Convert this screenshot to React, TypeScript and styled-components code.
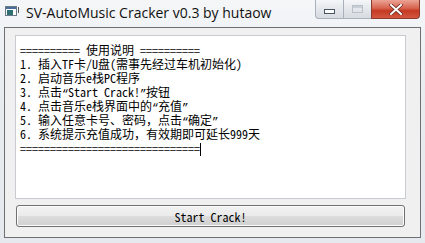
import styled, { createGlobalStyle } from "styled-components";

const GlobalStyle = createGlobalStyle`
  html, body {
    margin: 0;
    padding: 0;
    background: #e9edf1;
  }
`;

const lines = [
  "========== 使用说明 ==========",
  "1. 插入TF卡/U盘(需事先经过车机初始化)",
  "2. 启动音乐e栈PC程序",
  "3. 点击“Start Crack!”按钮",
  "4. 点击音乐e栈界面中的“充值”",
  "5. 输入任意卡号、密码，点击“确定”",
  "6. 系统提示充值成功，有效期即可延长999天",
];

// the old SimSun shows curly quotes half-width, so they get their own narrow cell
const renderLine = (line: string) =>
  line.split(/([“”])/).map((part, idx) =>
    part === "“" || part === "”" ? (
      <HalfQuote key={idx}>{part}</HalfQuote>
    ) : (
      part
    )
  );

function App() {
  return (
    <>
      <GlobalStyle />
      <Window>
        <TitleBar>
          <AppIcon>
            <svg width="12" height="10" viewBox="0 0 12 10">
              <rect x="0.5" y="0.5" width="11" height="9" fill="#fff" stroke="#6a7a88" />
              <rect x="1" y="1" width="10" height="2" fill="#4a6e9a" />
              <rect x="2" y="4" width="6" height="5" fill="#2f6f73" />
            </svg>
            <IconMark />
          </AppIcon>
          <Title>SV-AutoMusic Cracker v0.3 by hutaow</Title>
          <Controls>
            <CtrlButton>
              <MinGlyph />
            </CtrlButton>
            <CtrlButton>
              <MaxGlyph />
            </CtrlButton>
            <CloseButton>
              <svg width="14" height="11" viewBox="0 0 14 11">
                <path
                  d="M2 1 L12 10 M12 1 L2 10"
                  stroke="#6a2a22"
                  strokeWidth="3.6"
                  strokeLinecap="square"
                />
                <path
                  d="M2 1 L12 10 M12 1 L2 10"
                  stroke="#fff"
                  strokeWidth="2"
                  strokeLinecap="square"
                />
              </svg>
            </CloseButton>
          </Controls>
        </TitleBar>
        <Frame>
          <Client>
            <TextArea>
              {lines.map((line, idx) => (
                <Line key={idx}>{renderLine(line)}</Line>
              ))}
              <Line>
                ==============================
                <Caret />
              </Line>
            </TextArea>
            <StartButton>Start Crack!</StartButton>
          </Client>
        </Frame>
      </Window>
    </>
  );
}

const Window = styled.div`
  width: 425px;
  height: 243px;
  display: flex;
  flex-direction: column;
  background: linear-gradient(180deg, #f4f6f8 0%, #e8ecef 40%, #e6eaee 100%);
`;

const TitleBar = styled.div`
  height: 27px;
  display: flex;
  align-items: flex-start;
  padding-left: 5px;
  box-sizing: border-box;
`;

const AppIcon = styled.div`
  position: relative;
  width: 16px;
  height: 12px;
  margin-top: 6px;
  display: flex;
`;

const IconMark = styled.span`
  position: absolute;
  left: 13px;
  top: 1px;
  width: 1px;
  height: 6px;
  background: #555;
`;

const Title = styled.div`
  margin-left: 5px;
  margin-top: 4px;
  font-family: "Open Sans", "Noto Sans", sans-serif;
  font-size: 14px;
  line-height: 18px;
  color: #111;
  white-space: nowrap;
`;

const Controls = styled.div`
  margin-left: auto;
  margin-right: 5px;
  display: flex;
  height: 19px;
`;

const CtrlButton = styled.div`
  width: 27px;
  height: 18px;
  border: 1px solid #a9b1bb;
  border-top: none;
  border-right: none;
  background: linear-gradient(180deg, #f4f6f8 0%, #e2e6ea 55%, #d6dbe1 100%);
  display: flex;
  align-items: center;
  justify-content: center;
  &:first-child {
    border-bottom-left-radius: 4px;
  }
`;

const MinGlyph = styled.span`
  width: 9px;
  height: 3px;
  border: 1px solid #4a5562;
  background: #fff;
  margin-top: 4px;
`;

const MaxGlyph = styled.span`
  width: 9px;
  height: 6px;
  border: 1px solid #b9c0c8;
  box-shadow: inset 0 2px 0 #c9cfd6;
`;

const CloseButton = styled.div`
  width: 47px;
  height: 18px;
  border: 1px solid #8c3a30;
  border-top: none;
  border-bottom-right-radius: 4px;
  background: linear-gradient(180deg, #eba395 0%, #d8644f 45%, #c43a22 60%, #d4583f 100%);
  display: flex;
  align-items: center;
  justify-content: center;
`;

const Frame = styled.div`
  flex: 1;
  display: flex;
  padding: 0 4px 5px 4px;
`;

const Client = styled.div`
  flex: 1;
  display: flex;
  flex-direction: column;
  background: #f0f0f0;
  border: 1px solid #6d6f73;
  padding: 7px 14px 10px 10px;
`;

const TextArea = styled.div`
  height: 164px;
  background: #fff;
  border: 1px solid #c8ccd1;
  padding: 7px 4px;
  box-sizing: border-box;
  font-family: "Noto Sans Mono CJK SC", "Noto Sans CJK SC", monospace;
  font-size: 12px;
  color: #000;
`;

const Line = styled.div`
  height: 14px;
  line-height: 14px;
  white-space: pre;
  overflow: visible;
`;

const HalfQuote = styled.span`
  display: inline-block;
  width: 6px;
  font-family: "Liberation Mono", monospace;
  font-size: 11px;
  text-align: center;
`;

const Caret = styled.span`
  display: inline-block;
  width: 1px;
  height: 13px;
  vertical-align: middle;
  background: #000;
`;

const StartButton = styled.button`
  margin: 6px 1px 0;
  height: 22px;
  border: 1px solid #707070;
  border-radius: 3px;
  background: linear-gradient(180deg, #f2f2f2 0%, #ebebeb 48%, #dddddd 52%, #cfcfcf 100%);
  box-shadow: inset 0 0 0 1px #fcfcfc;
  font-family: "Noto Sans Mono CJK SC", "Liberation Mono", monospace;
  font-size: 12px;
  color: #000;
  padding: 0;
`;

export default App;
